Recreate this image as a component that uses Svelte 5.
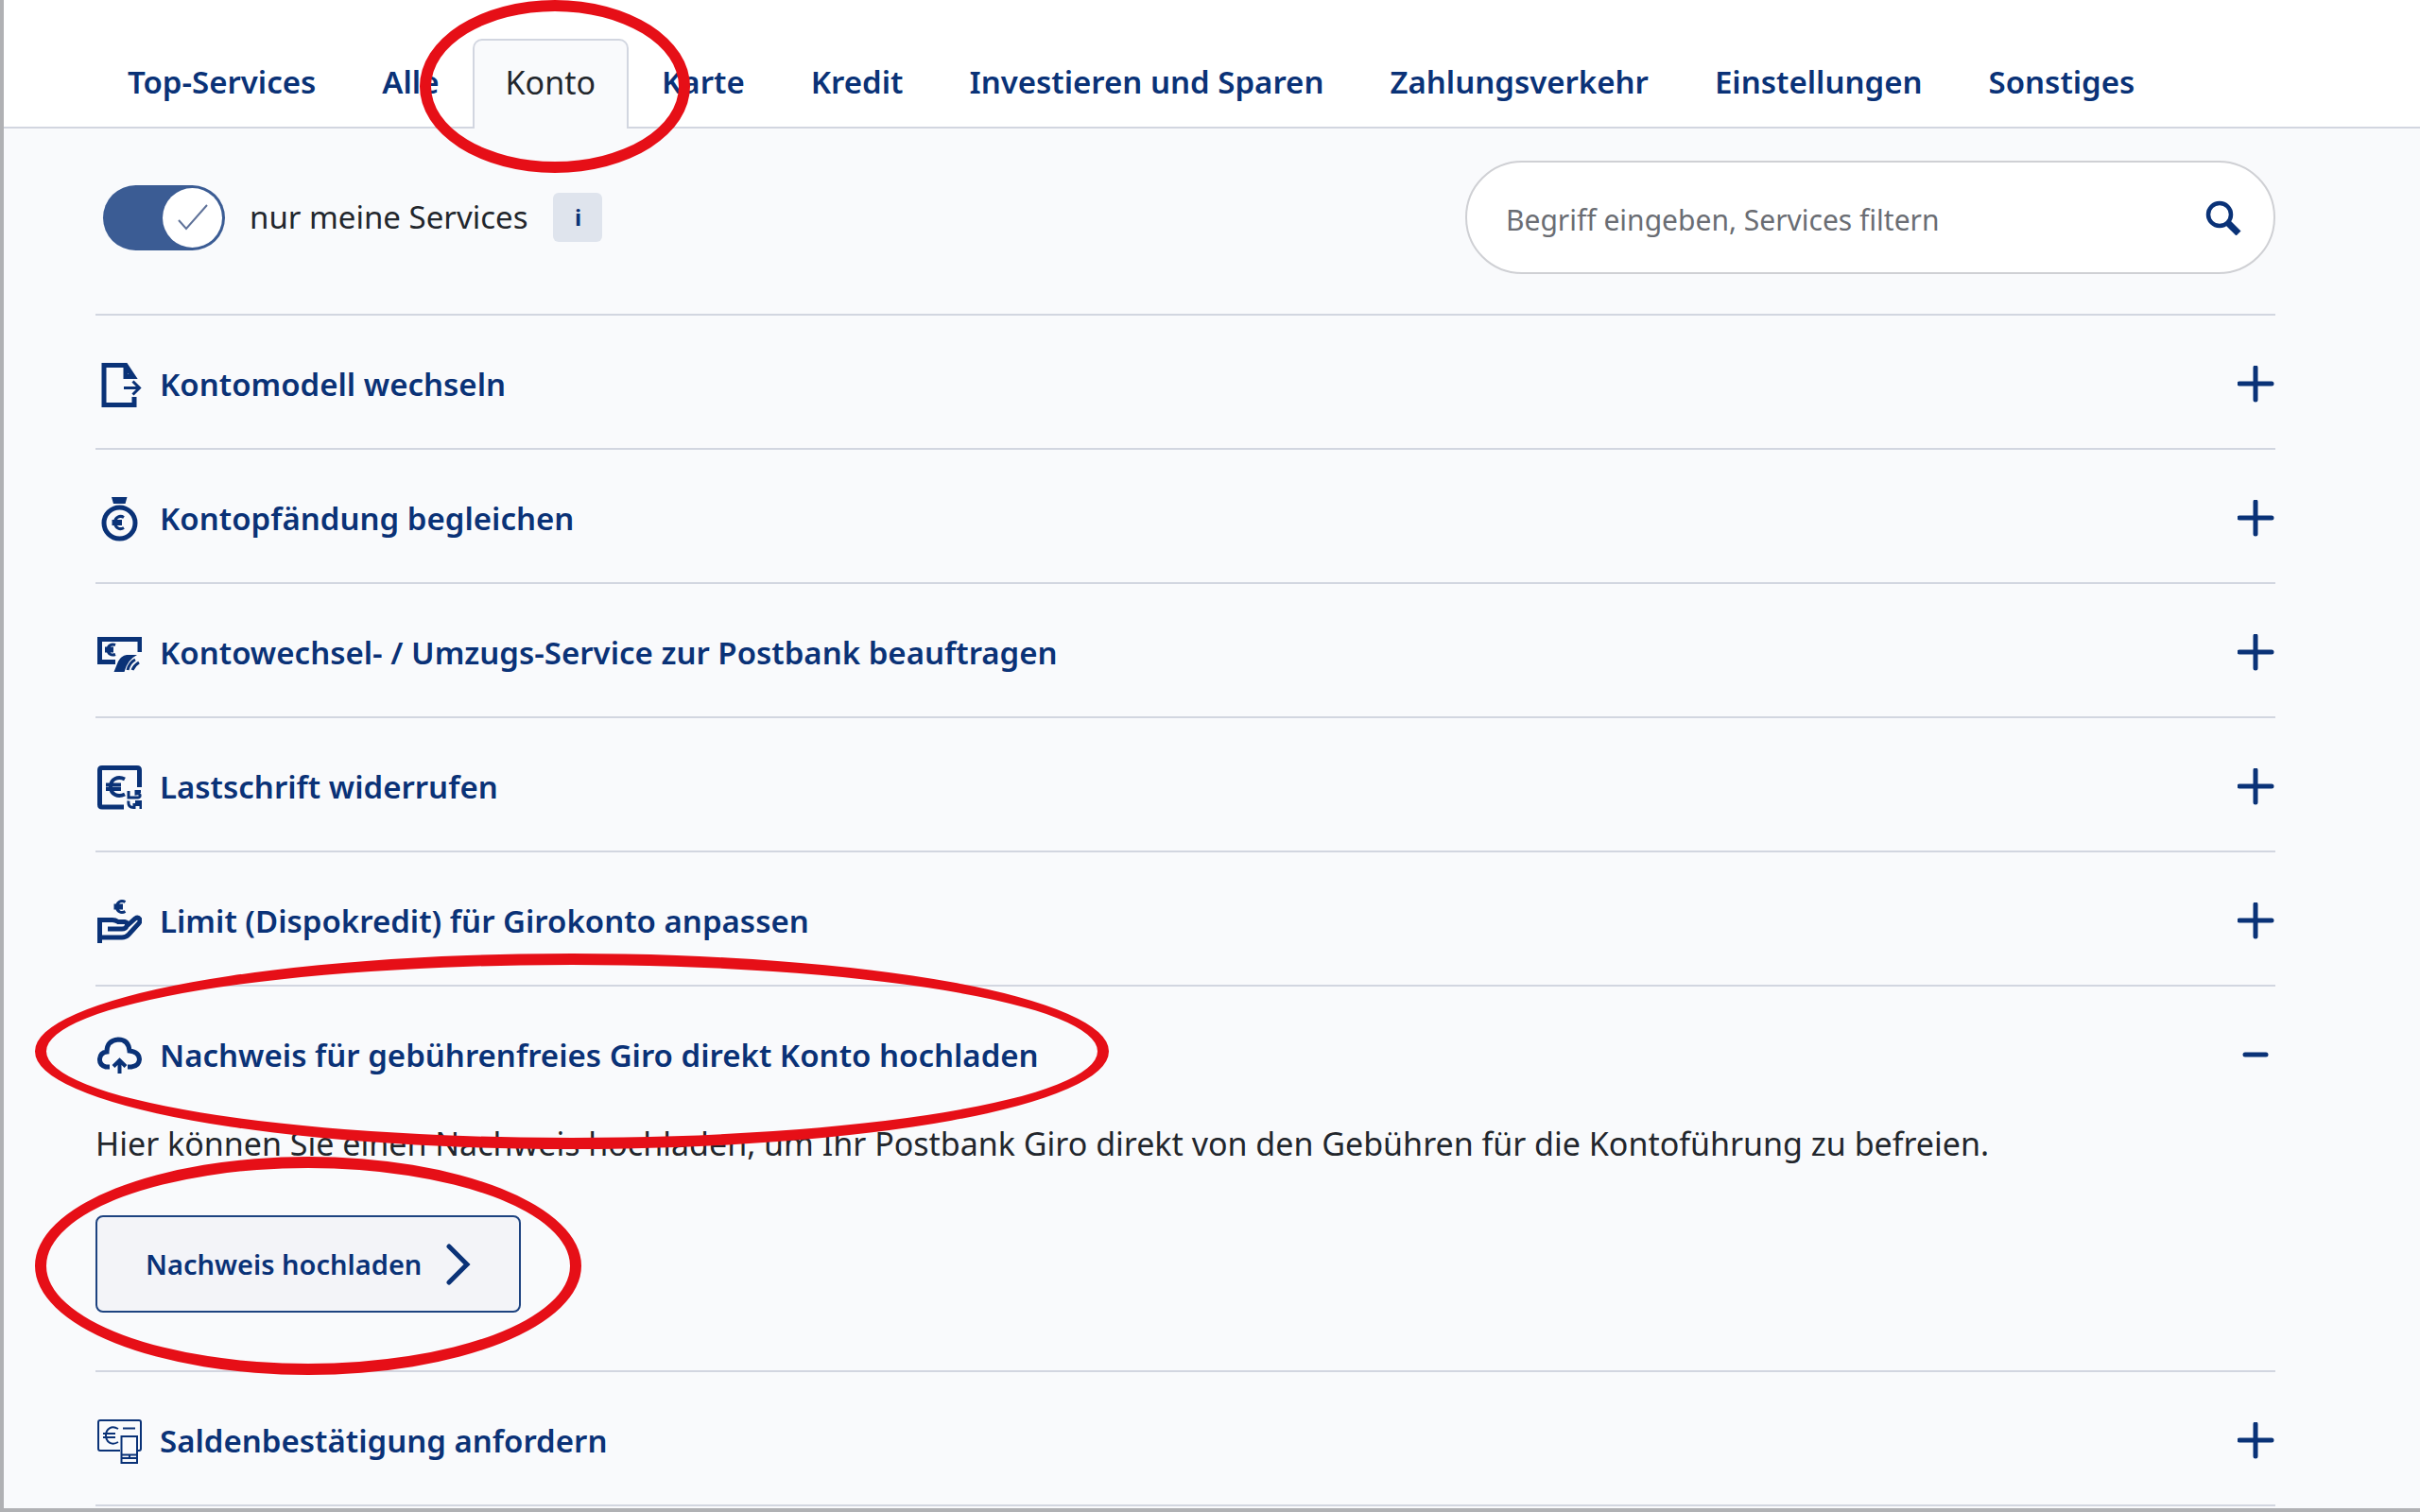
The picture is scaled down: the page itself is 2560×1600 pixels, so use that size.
<script>
  // Tabs above the service list
  const tabs = [
    "Top-Services",
    "Alle",
    "Konto",
    "Karte",
    "Kredit",
    "Investieren und Sparen",
    "Zahlungsverkehr",
    "Einstellungen",
    "Sonstiges",
  ];

  // text and action are only shown while the entry is open
  const services = [
    { icon: "switch", label: "Kontomodell wechseln" },
    { icon: "bag", label: "Kontopfändung begleichen" },
    { icon: "note", label: "Kontowechsel- / Umzugs-Service zur Postbank beauftragen" },
    { icon: "debit", label: "Lastschrift widerrufen" },
    { icon: "hand", label: "Limit (Dispokredit) für Girokonto anpassen" },
    {
      icon: "cloud",
      label: "Nachweis für gebührenfreies Giro direkt Konto hochladen",
      text: "Hier können Sie einen Nachweis hochladen, um Ihr Postbank Giro direkt von den Gebühren für die Kontoführung zu befreien.",
      action: "Nachweis hochladen",
    },
    { icon: "balance", label: "Saldenbestätigung anfordern" },
  ];

  let activeTab = "Konto";
  let openIcon = "cloud";
  let onlyMine = true;
  let query = "";

  const toggle = (icon) => (openIcon = openIcon === icon ? "" : icon);
</script>

<div class="page">
  <nav>
    {#each tabs as tab}
      <button class="tab" class:active={tab === activeTab} on:click={() => (activeTab = tab)}>
        {tab}
      </button>
    {/each}
  </nav>

  <main>
    <div class="filter">
      <label class="switch">
        <input type="checkbox" bind:checked={onlyMine} />
        <span class="track">
          <span class="knob">
            <svg viewBox="0 0 32 28" width="32" height="28">
              <path d="M1 17L9 26L31 1" />
            </svg>
          </span>
        </span>
        <span>nur meine Services</span>
      </label>
      <button class="info" aria-label="Information">i</button>

      <div class="search">
        <input type="text" placeholder="Begriff eingeben, Services filtern" aria-label="Services filtern" bind:value={query} />
        <button aria-label="Suchen">
          <svg viewBox="0 0 38 38" width="38" height="38">
            <circle cx="15" cy="16" r="12" stroke-width="4.500" />
            <path d="M24 25L35 36" stroke-width="7" />
          </svg>
        </button>
      </div>
    </div>

    <ul class="services">
      {#each services as service}
        <li>
          <button class="row" aria-expanded={openIcon === service.icon} on:click={() => toggle(service.icon)}>
            <svg class="icon" viewBox="0 0 48 48" width="48" height="48">
              {#if service.icon === "switch"}
                <path d="M40 37V45.500H8V3.500H31L39 15.500H31V5" />
                <path d="M29 27.500H45M38.500 20.500L45.500 27.500L38.500 34.500" class="mid" />
              {:else if service.icon === "bag"}
                <path d="M16 1H32.500L30.500 8H18z" class="solid" />
                <circle cx="24.500" cy="28.500" r="16.500" />
                <path d="M29 22.500C25 20 19.500 22 19.500 28S25 36 29 33.500M16.500 26.500H27M16.500 29.500H27" class="mid" />
              {:else if service.icon === "note"}
                <path d="M20 33.500H3.500V9.500H46V23" />
                <path d="M20 15.500C16 14 12 16 12 20.500S16 27 20 25.500M9 19H18M9 22H18" class="mid" />
                <path d="M18.500 44L23 33Q26 27 32 26H43Q33 31 29.500 44z" class="solid" />
                <path d="M33 42Q35 34 41 31M38 42Q40 37 45 34" class="mid" />
              {:else if service.icon === "debit"}
                <path d="M45.500 24V6Q45.500 3.500 43 3.500H6Q3.500 3.500 3.500 6V42.500Q3.500 45 6 45H29" />
                <path d="M30 15.500C23 12 15 15 15 23.500S23 35 30 31.500M10 21.500H26M10 26H26" class="bold" />
                <path d="M34 28V35H44Q46.500 35 46 32Q45.500 30.500 42 31V28.500H47M47 47V39.500H41M34 38.500Q33 46 40 45.500V42.500H46" class="mid" />
              {:else if service.icon === "hand"}
                <path d="M30.500 3.500C26 1 21.500 3.500 21.500 8.500S26 16 30.500 13.500M18.500 7H28M18.500 10H28" class="mid" />
                <path d="M3.500 47V22.500H17Q20 22.500 23 24.500H30Q34 25 32 29L41 21Q44 19 46 22Q46.500 24 45 26L34 38Q31 41 27 41H3.500M32 29Q31 32 27 32H12" />
              {:else if service.icon === "cloud"}
                <path d="M14 36H10Q3 34 3.500 27.500Q4 21 11 20Q11 8 23 7Q34 7 35 19Q45 20 45.500 28Q45 35 37 36H33" />
                <path d="M24.500 43V30M18 35.500L24.500 29L31 35.500" class="bold" />
              {:else}
                <path d="M25 34H4Q2 34 2 32V4Q2 2 4 2H45Q47 2 47 4V32Q47 34 45 34H43" class="thin" />
                <path d="M23 11C16 7 10 11 10 18S16 29 23 25M7 16H20M7 20H20" class="thin" />
                <path d="M28 10.500H41M26.500 19H43V47H26.500zM26.500 38.500H43M26.500 42H43M35 39V43" class="thin" />
              {/if}
            </svg>
            <span class="label">{service.label}</span>
            <svg class="sign" viewBox="0 0 40 40" width="40" height="40">
              {#if openIcon === service.icon}
                <path d="M8 19H30" />
              {:else}
                <path d="M2 19H36M19 2V36" />
              {/if}
            </svg>
          </button>

          {#if openIcon === service.icon && service.text}
            <div class="details">
              <p>{service.text}</p>
              <button class="action">
                {service.action}
                <svg viewBox="0 0 26 44" width="26" height="44">
                  <path d="M3 3L22 22L3 41" />
                </svg>
              </button>
            </div>
          {/if}
        </li>
      {/each}
    </ul>
  </main>

  <!-- red pen marks over the page -->
  <span class="mark mark-tab"></span>
  <span class="mark mark-service"></span>
  <span class="mark mark-action"></span>
</div>

<style>
  :global(body) {
    margin: 0;
    background: #f9fafc;
  }

  .page {
    position: relative;
    box-sizing: border-box;
    min-height: 100vh;
    overflow: hidden;
    border-left: 4px solid #b0b1b4;
    border-bottom: 4px solid #b0b1b4;
    background: #f9fafc;
    color: #22262c;
    font-family: "Noto Sans", "Open Sans", sans-serif;
    font-size: 33px;
    line-height: 48px;
  }

  button {
    border: 0;
    padding: 0;
    background: none;
    color: #0a3277;
    font: inherit;
    cursor: pointer;
  }

  svg {
    display: block;
    flex: none;
    fill: none;
    stroke: #0a3277;
  }

  nav {
    display: flex;
    padding: 41px 0 0 96px;
    border-bottom: 2px solid #d2d6e0;
    background: #fff;
  }

  .tab {
    height: 95px;
    margin-bottom: -2px;
    padding: 0 33px 6px;
    border: 2px solid transparent;
    border-bottom: 0;
    border-radius: 10px 10px 0 0;
    font-weight: 600;
    white-space: nowrap;
  }

  .tab.active {
    border-color: #d2d6e0;
    background: #f9fafc;
    color: #22262c;
    font-size: 34px;
    font-weight: 400;
  }

  main {
    padding: 34px 153px 0 97px;
  }

  .filter {
    display: flex;
    align-items: center;
    margin-bottom: 42px;
    padding-left: 8px;
  }

  .switch {
    display: flex;
    align-items: center;
    gap: 26px;
    cursor: pointer;
  }

  .switch input {
    position: absolute;
    opacity: 0;
  }

  .track {
    display: flex;
    box-sizing: border-box;
    width: 129px;
    height: 69px;
    padding: 3px;
    border-radius: 35px;
    background: #a9b0bd;
  }

  .switch input:checked + .track {
    justify-content: flex-end;
    background: #3b5c94;
  }

  .knob {
    display: grid;
    place-items: center;
    width: 63px;
    height: 63px;
    border-radius: 50%;
    background: #fff;
  }

  .knob svg {
    stroke: #5f7299;
    stroke-width: 2;
  }

  .info {
    width: 52px;
    height: 52px;
    margin-left: 27px;
    border-radius: 6px;
    background: #dfe4ed;
    font-size: 24px;
    font-weight: 700;
  }

  .search {
    display: flex;
    align-items: center;
    box-sizing: border-box;
    width: 857px;
    height: 120px;
    margin-left: auto;
    padding: 0 34px 0 41px;
    border: 2px solid #cfd0d4;
    border-radius: 60px;
    background: #fff;
  }

  .search input {
    flex: 1;
    min-width: 0;
    padding: 6px 0 0;
    border: 0;
    outline: 0;
    background: none;
    color: #22262c;
    font: inherit;
    font-size: 30px;
  }

  .search input::placeholder {
    color: #6a6d73;
    opacity: 1;
  }

  .services {
    margin: 0;
    padding: 0;
    border-top: 2px solid #d2d6e0;
    list-style: none;
  }

  .services li {
    border-bottom: 2px solid #d2d6e0;
  }

  .row {
    display: flex;
    align-items: center;
    width: 100%;
    height: 140px;
    padding: 5px 0 0 1px;
    text-align: left;
  }

  .icon {
    margin-right: 19px;
    stroke-width: 5;
  }

  .icon .solid {
    fill: #0a3277;
    stroke: none;
  }

  .icon .thin {
    stroke-width: 2;
  }

  .icon .mid {
    stroke-width: 3;
  }

  .icon .bold {
    stroke-width: 4;
  }

  .label {
    flex: 1;
    font-weight: 600;
  }

  .sign {
    stroke-linecap: round;
    stroke-width: 5;
  }

  .details {
    padding: 2px 0 61px;
  }

  .details p {
    margin: 0 0 52px;
    font-size: 34px;
  }

  .action {
    display: flex;
    align-items: center;
    gap: 26px;
    height: 103px;
    padding: 0 51px;
    border: 2px solid #1d4380;
    border-radius: 8px;
    background: #f3f4f8;
    font-size: 29px;
    font-weight: 600;
  }

  .action svg {
    stroke-linecap: round;
    stroke-width: 5;
  }

  .mark {
    position: absolute;
    box-sizing: border-box;
    border: 12px solid #e60f17;
    border-radius: 50%;
    pointer-events: none;
  }

  .mark-tab {
    top: 0;
    left: 440px;
    width: 286px;
    height: 183px;
  }

  .mark-service {
    top: 1009px;
    left: 33px;
    width: 1136px;
    height: 207px;
  }

  .mark-action {
    top: 1224px;
    left: 33px;
    width: 578px;
    height: 231px;
  }
</style>
